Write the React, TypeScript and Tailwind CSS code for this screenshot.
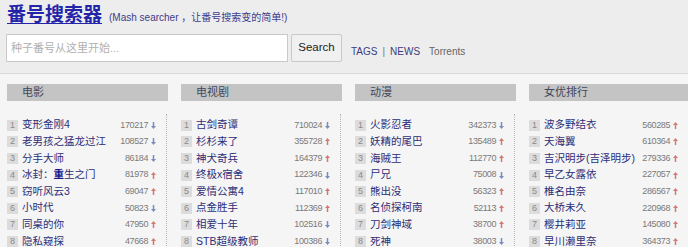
import React from "react";

type Item = { t: React.ReactNode; n: string; up: boolean };

const cols: { title: string; items: Item[] }[] = [
  {
    title: "电影",
    items: [
      { t: "变形金刚4", n: "170217", up: false },
      { t: "老男孩之猛龙过江", n: "108527", up: false },
      { t: "分手大师", n: "86184", up: false },
      {
        t: (
          <>
            冰封：<span className="text-[#16168c] font-semibold">重</span>生之门
          </>
        ),
        n: "81978",
        up: true,
      },
      { t: "窃听风云3", n: "69047", up: true },
      { t: "小时代", n: "50823", up: false },
      { t: "同桌的你", n: "47950", up: true },
      { t: "隐私窥探", n: "47668", up: true },
    ],
  },
  {
    title: "电视剧",
    items: [
      { t: "古剑奇谭", n: "710024", up: false },
      { t: "杉杉来了", n: "355728", up: true },
      { t: "神犬奇兵", n: "164379", up: true },
      { t: "终极x宿舍", n: "122346", up: false },
      { t: "爱情公寓4", n: "117010", up: true },
      { t: "点金胜手", n: "112369", up: true },
      { t: "相爱十年", n: "102516", up: false },
      { t: "STB超级教师", n: "100386", up: false },
    ],
  },
  {
    title: "动漫",
    items: [
      { t: "火影忍者", n: "342373", up: false },
      { t: "妖精的尾巴", n: "135489", up: true },
      { t: "海贼王", n: "112770", up: true },
      { t: "尸兄", n: "75008", up: false },
      { t: "熊出没", n: "56323", up: true },
      { t: "名侦探柯南", n: "52113", up: true },
      { t: "刀剑神域", n: "38700", up: true },
      { t: "死神", n: "38003", up: false },
    ],
  },
  {
    title: "女优排行",
    items: [
      { t: "波多野结衣", n: "560285", up: true },
      { t: "天海翼", n: "610364", up: true },
      { t: "吉沢明步(吉泽明步)", n: "279336", up: true },
      { t: "早乙女露依", n: "227057", up: true },
      { t: "椎名由奈", n: "286567", up: true },
      { t: "大桥未久", n: "220968", up: true },
      { t: "樱井莉亚", n: "145080", up: true },
      { t: "早川濑里奈", n: "364373", up: true },
    ],
  },
];

function Arrow({ up }: { up: boolean }) {
  const color = up ? "#d27a72" : "#7c8cba";
  return (
    <svg width="5" height="7" viewBox="0 0 5 7" className="shrink-0">
      {up ? (
        <>
          <path d="M2.5 0 L5 3 L0 3 Z" fill={color} />
          <rect x="1.75" y="2.5" width="1.5" height="4.5" fill={color} />
        </>
      ) : (
        <>
          <rect x="1.75" y="0" width="1.5" height="4.5" fill={color} />
          <path d="M0 4 L5 4 L2.5 7 Z" fill={color} />
        </>
      )}
    </svg>
  );
}

export default function App() {
  return (
    <div
      className="w-[688px] h-[247px] overflow-hidden bg-[#f5f5f5]"
      style={{ fontFamily: '"Liberation Sans", "Noto Sans CJK SC", sans-serif' }}
    >
      <header className="h-[74px] bg-[#ededed] border-b border-[#d9d9d9] pl-[7px] pt-[2px]">
        <div className="flex items-baseline h-[22px]">
          <a
            href="#"
            className="text-[19px] leading-[22px] font-bold text-[#2424a8] underline underline-offset-[2px]"
            style={{ fontFamily: '"Noto Sans CJK SC", sans-serif' }}
          >
            番号搜索器
          </a>
          <span className="ml-[7px] text-[10px] text-[#3c3c8c]">
            (Mash searcher ，让番号搜索变的简单!)
          </span>
        </div>
        <div className="flex items-center mt-[10px] -ml-[1px]">
          <input
            className="w-[282px] h-[28px] bg-white border border-[#c9c9c9] pl-[4px] text-[11px] outline-none placeholder:text-[#b0b0b0]"
            placeholder="种子番号从这里开始..."
          />
          <button className="ml-[3px] w-[51px] h-[28px] bg-[#f0f0f0] border border-[#c9c9c9] rounded-[2px] text-[11.5px] text-[#222]">
            Search
          </button>
          <div className="ml-[9px] self-end mb-[4px] text-[10px] leading-[13px] flex">
            <a href="#" className="text-[#3c3c7e]">TAGS</a>
            <span className="text-[#777] ml-[5px]">|</span>
            <a href="#" className="text-[#3c3c7e] ml-[5px]">NEWS</a>
            <a href="#" className="text-[#666] ml-[9px]">Torrents</a>
          </div>
        </div>
      </header>
      <main className="pl-[7px] pt-[10px] flex gap-[13px]">
        {cols.map((c) => (
          <section key={c.title} className="w-[161px] shrink-0">
            <div className="h-[17px] bg-[#c4c4c4] pl-[15px] flex items-center text-[11px] text-[#3e4860]">
              {c.title}
            </div>
            <div className="mt-[13px] w-[160px] border-r border-dotted border-[#b5b5b5] pt-[3px]">
              {c.items.map((it, i) => (
                <div key={i} className="h-[16.6px] flex items-center pr-[10px]">
                  <span className="w-[11px] h-[11px] bg-[#dcdcdc] text-[9px] leading-[11px] text-[#8a8a8a] text-center shrink-0">
                    {i + 1}
                  </span>
                  <span className="ml-[4px] text-[10.5px] text-[#2d2d76] whitespace-nowrap flex-1">
                    {it.t}
                  </span>
                  <span className="text-[9px] tracking-[-0.4px] text-[#7a7a7a] mr-[3px]">{it.n}</span>
                  <Arrow up={it.up} />
                </div>
              ))}
            </div>
          </section>
        ))}
      </main>
    </div>
  );
}
